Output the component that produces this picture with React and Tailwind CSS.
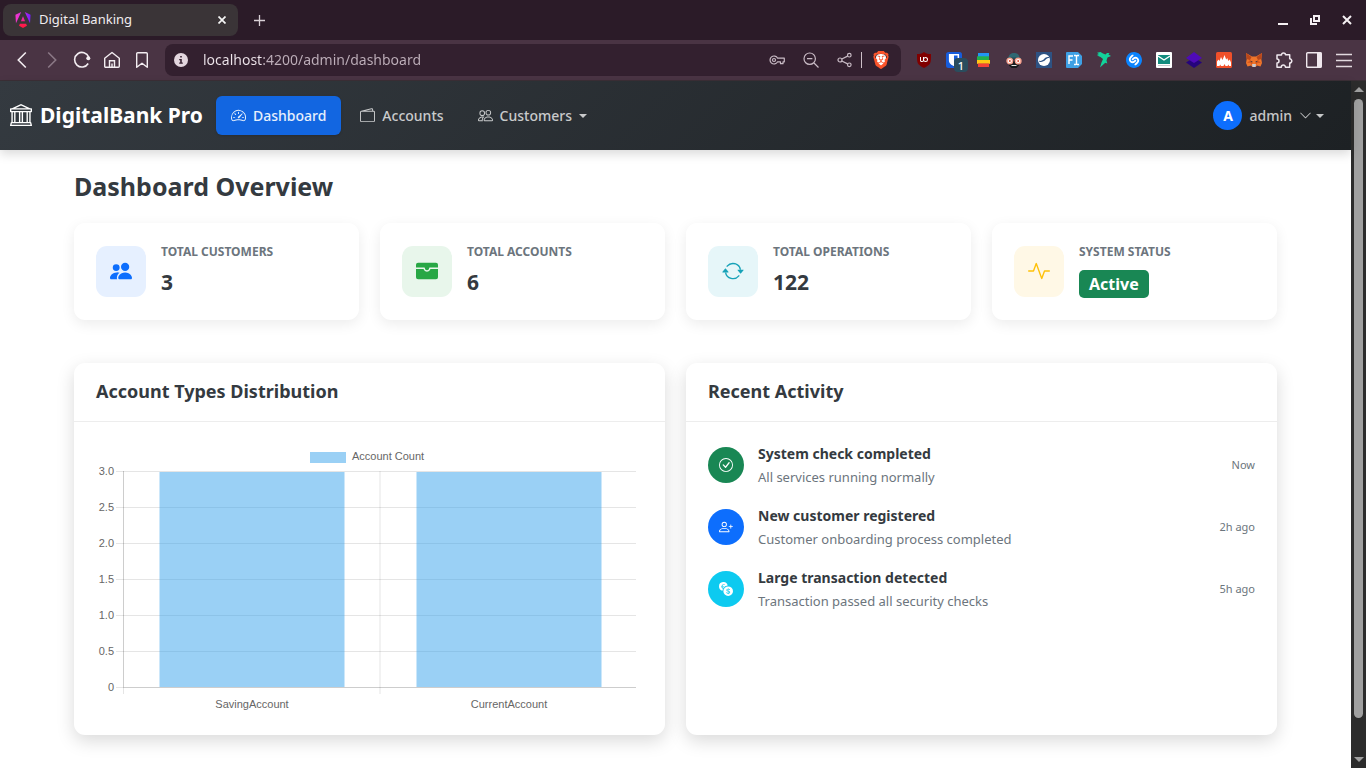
import React from "react";
import {
  BsBank, BsSpeedometer2, BsWallet2, BsPeople, BsPeopleFill, BsWalletFill, BsArrowRepeat,
  BsActivity, BsCheckCircle, BsPersonPlus, BsCurrencyExchange, BsChevronDown,
} from "react-icons/bs";
import { SiBrave, SiUblockorigin, SiBitwarden, SiShazam } from "react-icons/si";

const S = ({ children, size = 18, box = 18, ...p }) => (
  <svg width={size} height={size} viewBox={`0 0 ${box} ${box}`} fill="none" aria-hidden="true" {...p}>{children}</svg>
);

const Angular = () => (
  <S size={16} box={24}>
    <defs>
      <linearGradient id="ngBody" x1="0" y1="6" x2="24" y2="4" gradientUnits="userSpaceOnUse">
        <stop offset="0" stopColor="#f637c8" /><stop offset="0.5" stopColor="#d02be0" /><stop offset="1" stopColor="#6a1cff" />
      </linearGradient>
      <linearGradient id="ngFoot" x1="12" y1="6" x2="12" y2="24" gradientUnits="userSpaceOnUse">
        <stop offset="0" stopColor="#e62bd0" /><stop offset="0.7" stopColor="#ff1a52" /><stop offset="1" stopColor="#ff1a3c" />
      </linearGradient>
    </defs>
    <path fill="url(#ngBody)" d="M14.692 0l7.832 16.855.814-12.856L14.692 0ZM9.308 0 .662 3.999l.814 12.856L9.308 0Z" />
    <path fill="url(#ngFoot)" d="M16.712 17.711H7.288l-1.204 2.916L12 24l5.916-3.373-1.204-2.916ZM8.903 13.93h6.198L12 6.396 8.903 13.93Z" />
  </S>
);

const ToolButton = ({ label, children }) => (
  <button type="button" aria-label={label} className="flex h-8 w-[30px] shrink-0 items-center justify-center">{children}</button>
);

const Back = () => <S stroke="#f3edf1" strokeWidth="1.6"><path d="M12.800 1.500 5.300 9l7.500 7.500" /></S>;
const Forward = () => <S stroke="#8b7886" strokeWidth="1.6"><path d="M5.200 1.500 12.700 9l-7.500 7.500" /></S>;
const Reload = () => (
  <S stroke="#f3edf1" strokeWidth="1.6">
    <path d="M15.200 12.500A7.300 7.300 0 1 1 15.700 6" />
    <circle cx="15.300" cy="7.200" r="2" fill="#f3edf1" stroke="none" />
  </S>
);
const Home = () => (
  <S stroke="#f3edf1" strokeWidth="1.400">
    <path d="M1.700 7.200 9 1.500l7.300 5.700v8.100a1 1 0 0 1-1 1H2.700a1 1 0 0 1-1-1Z" strokeLinejoin="round" />
    <path d="M6.500 16V9.800h5V16M9 16v-3.500" />
  </S>
);
const Bookmark = () => <S stroke="#f3edf1" strokeWidth="1.400"><path d="M3.700 2.700a1 1 0 0 1 1-1h8.600a1 1 0 0 1 1 1v13.600L9 12.200l-5.300 4.100Z" strokeLinejoin="round" /></S>;
const Info = () => (
  <S size={14} box={14}>
    <circle cx="7" cy="7" r="7" fill="#e3d6de" />
    <path d="M6.200 3h1.600v1.600H6.200zM5.200 6h2.600v3.600h1v1.200H5.200V9.600h1V7.200h-1z" fill="#35202f" />
  </S>
);
const Key = () => (
  <S size={16} box={16} stroke="#c9bbc5" strokeWidth="1.200">
    <path d="M8.600 6.200H15.300V9.800H14V11.700H11.500V9.800H8.600A4 4 0 1 1 8.600 6.200Z" strokeLinejoin="round" />
    <circle cx="5" cy="8" r="1.500" />
  </S>
);
const ZoomOut = () => (
  <S size={16} box={16} stroke="#c9bbc5" strokeWidth="1.200"><circle cx="6.700" cy="6.700" r="5.700" /><path d="M11 11l4.500 4.500M4 6.700h5.400" /></S>
);
const Share = () => (
  <S size={16} box={16} stroke="#c9bbc5" strokeWidth="1.200">
    <circle cx="3" cy="8" r="2" /><circle cx="12.300" cy="3.200" r="1.800" /><circle cx="12.300" cy="12.800" r="1.800" />
    <path d="M4.800 7 10.600 4.100M4.800 9l5.800 2.900" />
  </S>
);
const BraveMark = () => (
  <span className="relative flex h-5 w-[18px] items-center justify-center">
    <span className="absolute h-3 w-2.5 rounded bg-white" />
    <SiBrave size={20} color="#fb542b" className="relative" />
  </span>
);
const Bitwarden = () => (
  <span className="relative flex h-4 w-4">
    <span className="absolute inset-0.5 bg-white" />
    <SiBitwarden size={16} color="#175ddc" className="relative" />
    <span className="absolute top-1.5 left-2 flex h-3.5 w-3.5 items-center justify-center rounded-sm bg-[#2a4d5e] text-[11px] leading-none font-medium text-white">1</span>
  </span>
);
const Stack = () => (
  <S size={14} box={14}>
    <path d="M1 0h11v4H1z" fill="#2196f3" /><path d="M0 3.300h12v4.200H0z" fill="#22b14c" />
    <path d="M0 7h13v3.800H0z" fill="#ffc914" /><path d="M1 10.500h11V14H1z" fill="#f44336" />
  </S>
);
const Spy = () => (
  <S size={16} box={16}>
    <path d="M2.500 6C2.500 2.500 5 1 8 1s5.500 1.500 5.500 5Z" fill="#2f6873" /><path d="M1 5.500h14V7H1z" fill="#264d57" />
    <path d="M3 9h10v4.500L10.500 16h-5L3 13.500Z" fill="#171a1d" />
    <circle cx="3.800" cy="9" r="2.800" fill="#fff" stroke="#f6a08d" strokeWidth="1.400" />
    <circle cx="12.200" cy="9" r="2.800" fill="#fff" stroke="#f6a08d" strokeWidth="1.400" />
    <circle cx="3.800" cy="9" r="1" fill="#d9472f" /><circle cx="12.200" cy="9" r="1" fill="#d9472f" />
    <path d="M5.500 13h5v1h-5z" fill="#e6e6e6" />
  </S>
);
const Wave = () => (
  <S size={16} box={16}>
    <path fill="#2e5283" d="M0 0h16v16H0z" /><circle cx="8" cy="8" r="6" fill="#fff" />
    <path d="M3.200 9.800C5.500 10.500 8 9.500 9.500 7.800c1.200-1.400 2.400-2 4-1.800a6 6 0 0 0-.3-.8C11 4.600 9.500 5.500 8.300 6.800 6.800 8.500 5 9.300 3.200 8.800Z" fill="#2e5283" />
  </S>
);
const Fonts = () => (
  <S size={16} box={16}>
    <path d="M1 0h11l4 4v8l-4 4H1a1 1 0 0 1-1-1V1a1 1 0 0 1 1-1Z" fill="#3ea0e5" />
    <path d="M3 12V4h4M3 8h3.500M8 3.500h1.500L10.500 4l1-.5H13M8 12.500h1.500l1-.5 1 .5H13M10.500 4v8" stroke="#fff" strokeWidth="1.400" />
  </S>
);
const Bird = () => (
  <S size={16} box={16}>
    <path d="M1 .800 4.500 0 7 1.500 9.500 2.500 11 1h2.500L12.500 2.500l2.500 1.500-3.500 1.500-1 3 .8 3-2-.8L4 15.500l1.500-5L7 7 4.500 5 1 3.500l2-.5L.800 2l2-.300Z" fill="#12d39b" />
  </S>
);
const Mail = () => (
  <S size={16} box={16}>
    <rect width="16" height="16" rx="1" fill="#fff" /><path d="M2 3h12v9H2z" fill="#128c7e" />
    <path d="m2 4 6 4 6-4" stroke="#fff" strokeWidth="1.400" /><path d="M2 13.500h12" stroke="#c7cccf" />
  </S>
);
const Layers = () => (
  <S size={16} box={16}><path d="m8 5.500 8 5L8 16 0 10.500Z" fill="#25047d" /><path d="m8 0 8 6-8 5-8-5Z" fill="#4f0bb8" /></S>
);
const Flames = () => (
  <S size={16} box={16}>
    <rect width="16" height="16" rx="1.500" fill="#f0502a" />
    <path d="M1 14V9.500L2.500 7.500l1 1.500L5 5l1.500 3L8.500 3l1.700 4.500L11.200 6l1.300 3L13.700 7.500 15 10.500V14h-2l-.5-1.500-1 1.500H9.500l-1-2-1 2H5l-.8-1.500L3.500 14Z" fill="#fff" />
  </S>
);
const Fox = () => (
  <S size={16} box={16}>
    <path d="m0 1 6 3.500h4L16 1l-.7 6L16 11l-1.500 3.500-3.500-1L9.500 15h-3L5 13.500l-3.500 1L0 11l.7-4Z" fill="#f0752b" />
    <path d="m0 1 5.500 4L4 8 .7 7ZM16 1l-5.500 4L12 8l3.300-1Z" fill="#b9471b" />
    <path d="m4 8 2.500 2-.5 3.500L4.500 11 1 11ZM12 8l-2.500 2 .5 3.500 1.500-2.500 3.500 0Z" fill="#d9591e" />
    <path d="M4 8.800 6.500 9.500 6 10.500ZM12 8.800 9.500 9.500l.5 1Z" fill="#233447" /><path d="m6 12.500.7-.5h2.600l.7.500-.5 2.500h-3Z" fill="#c9ccd2" />
  </S>
);
const Puzzle = () => (
  <S stroke="#f0e8ee" strokeWidth="1.500">
    <path d="M2 4h4.500A2 2 0 1 1 10.500 3.800h4.200v4A2 2 0 1 1 14.700 12v4.200h-4.200a2 2 0 1 0-4.200 0H2V12a2 2 0 1 0 0-4Z" strokeLinejoin="round" />
  </S>
);
const Panel = () => <S><rect x="1.700" y="1.700" width="14.600" height="14.600" rx="1" stroke="#f0e8ee" strokeWidth="1.400" /><path d="M12 1.500h4.500v15H12z" fill="#f0e8ee" /></S>;
const Menu = () => <S><path d="M1 3.500h16M1 9.500h16M1 15.500h16" stroke="#e2d9df" strokeWidth="1.500" /></S>;

const extensions = [
  ["uBlock Origin", () => <span className="relative flex h-4 w-4"><span className="absolute inset-1 bg-white" /><SiUblockorigin size={16} color="#800000" className="relative" /></span>],
  ["Bitwarden", Bitwarden], ["Stack", Stack], ["Privacy", Spy], ["Wave", Wave], ["Fonts", Fonts],
  ["Bird", Bird], ["Shazam", () => <span className="relative flex h-4 w-4"><span className="absolute inset-0.5 rounded-full bg-white" /><SiShazam size={16} color="#0a84ff" className="relative" /></span>],
  ["Mail", Mail], ["Layers", Layers], ["Flames", Flames], ["MetaMask", Fox],
  ["Extensions", Puzzle], ["Side panel", Panel], ["Menu", Menu],
];

function BrowserChrome() {
  return (
    <div className="shrink-0 border-b border-[#3b2f36]">
      <div className="flex h-10 items-center bg-[#2b1b28] pr-[3px]">
        <div className="ml-[3px] flex h-8 w-[235px] items-center rounded-lg bg-[#3a3437] pr-2 pl-3">
          <Angular />
          <span className="ml-2 flex-1 text-[13px] text-[#f1edf0]">Digital Banking</span>
          <button type="button" aria-label="Close tab" className="flex h-4 w-4 items-center justify-center">
            <S size={8} box={8} stroke="#f5f5f5" strokeWidth="1.700"><path d="m.5.5 7 7M7.500.5l-7 7" /></S>
          </button>
        </div>
        <button type="button" aria-label="New tab" className="ml-3 flex h-[18px] w-[18px] items-center justify-center">
          <S size={11} box={11} stroke="#d9d0d6" strokeWidth="1.300"><path d="M5.500 0v11M0 5.500h11" /></S>
        </button>
        <div className="ml-auto flex">
          <button type="button" aria-label="Minimize" className="flex h-8 w-8 items-center justify-center"><S size={10} box={10}><path d="M0 8h10v2H0z" fill="#f5f0f3" /></S></button>
          <button type="button" aria-label="Restore" className="flex h-8 w-8 items-center justify-center"><S size={10} box={10} stroke="#f5f0f3" strokeWidth="2"><path d="M4 1h5v5H4zM1 3v6h6" /></S></button>
          <button type="button" aria-label="Close" className="flex h-8 w-8 items-center justify-center"><S size={10} box={10} stroke="#f5f0f3" strokeWidth="2"><path d="m1 1 8 8M9 1 1 9" /></S></button>
        </div>
      </div>
      <div className="flex h-10 items-center bg-[#4a3444] px-[7px]">
        <ToolButton label="Back"><Back /></ToolButton>
        <ToolButton label="Forward"><Forward /></ToolButton>
        <ToolButton label="Reload"><Reload /></ToolButton>
        <ToolButton label="Home"><Home /></ToolButton>
        <ToolButton label="Bookmark"><Bookmark /></ToolButton>
        <div className="mx-2 flex h-8 min-w-0 flex-1 items-center rounded-lg bg-[#33202f] pr-2 pl-[9px]">
          <Info />
          <input
            aria-label="Address" type="text" defaultValue="localhost:4200/admin/dashboard"
            className="ml-[15px] min-w-0 flex-1 bg-[linear-gradient(90deg,#efe6ec_60px,#bfb0bb_60px)] bg-clip-text text-sm leading-8 text-transparent outline-none"
          />
          <div className="flex items-center">
            <button type="button" aria-label="Passwords" className="mr-[18px]"><Key /></button>
            <button type="button" aria-label="Zoom" className="mr-[18px]"><ZoomOut /></button>
            <button type="button" aria-label="Share" className="mr-2"><Share /></button>
            <span className="mr-2.5 h-4 w-px bg-[#cdbfc8]" />
            <button type="button" aria-label="Brave Shields" className="mr-[3px]"><BraveMark /></button>
          </div>
        </div>
        {extensions.map(([label, Icon]) => <ToolButton key={label} label={label}><Icon /></ToolButton>)}
      </div>
    </div>
  );
}

const Caret = () => <span className="h-0 w-0 border-x-4 border-t-4 border-x-transparent border-t-current" />;

function Navbar() {
  return (
    <nav className="relative flex h-[69px] items-center bg-linear-135 from-[#343a40] to-[#1d2124] pr-[27px] pl-2.5 shadow-[0_4px_10px_rgba(0,0,0,0.15)]">
      <a href="#home" className="mr-[13px] flex items-center gap-2 pb-0.5 text-[21px] leading-8 font-bold text-white">
        <BsBank size={22} />DigitalBank Pro
      </a>
      <div className="flex gap-1 text-sm font-medium text-white/75">
        <a href="#dashboard" className="flex h-[39px] items-center gap-[7px] rounded-md bg-[#1266e1] px-[15px] text-white/90 shadow-sm">
          <BsSpeedometer2 size={15} />Dashboard
        </a>
        <a href="#accounts" className="flex h-[39px] items-center gap-[7px] px-[15px]"><BsWallet2 size={15} />Accounts</a>
        <button type="button" className="flex h-[39px] items-center gap-[7px] px-[15px]"><BsPeople size={15} />Customers<Caret /></button>
      </div>
      <button type="button" className="ml-auto flex items-center gap-[7px] text-sm font-medium text-white/75">
        <span className="flex h-[29px] w-[29px] items-center justify-center rounded-full bg-[#0d6efd] text-sm font-bold text-white">A</span>
        admin
        <span className="flex items-center gap-1"><BsChevronDown size={13} /><Caret /></span>
      </button>
    </nav>
  );
}

const stats = [
  { label: "Total Customers", value: "3", Icon: BsPeopleFill, tone: "bg-[#e6f0ff] text-[#0d6efd]" },
  { label: "Total Accounts", value: "6", Icon: BsWalletFill, tone: "bg-[#e8f6eb] text-[#28a745]" },
  { label: "Total Operations", value: "122", Icon: BsArrowRepeat, tone: "bg-[#e6f6f9] text-[#17a2b8]" },
  { label: "System Status", badge: "Active", Icon: BsActivity, tone: "bg-[#fff8e6] text-[#ffc107]" },
];

function StatCard({ label, value, badge, Icon, tone }) {
  return (
    <section className="flex items-center rounded-[11px] bg-white px-[22px] py-[21px] shadow-[0_4px_14px_rgba(0,0,0,0.08)]">
      <div className={`flex h-[51px] w-[50px] shrink-0 items-center justify-center rounded-[11px] pb-px ${tone}`}><Icon size={22} /></div>
      <div className="ml-[15px] h-[55px]">
        <h2 className="text-xs leading-4 font-bold whitespace-nowrap text-[#6c757d] uppercase">{label}</h2>
        {badge
          ? <span className="mt-2.5 flex h-7 w-fit items-center rounded-[5px] bg-[#198754] px-2.5 text-base font-bold text-white">{badge}</span>
          : <p className="mt-2 text-[21px] leading-7 font-bold text-[#343a40]">{value}</p>}
      </div>
    </section>
  );
}

const ticks = ["3.0", "2.5", "2.0", "1.5", "1.0", "0.5", "0"];

function BarChart() {
  return (
    <svg viewBox="0 -1 547 273" className="w-full" role="img" aria-label="Account Count by account type">
      <g stroke="#000" strokeOpacity="0.1">
        {ticks.map((t, i) => <path key={t} d={`M20 ${28.5 + i * 36}H540`} />)}
        <path d="M27.500 28v223M284 28v223M27.500 28v217M28 244.500H540" />
      </g>
      <g fill="#36a2eb" fillOpacity="0.5"><path d="M63.500 29h185v215h-185zM320.500 29h185v215h-185zM214 9h36v11h-36z" /></g>
      <g fill="#666" fontFamily="'Liberation Sans', Arial, sans-serif" fontSize="11">
        <text x="256" y="17">Account Count</text>
        {ticks.map((t, i) => <text key={t} x="18" y={32 + i * 36} textAnchor="end">{t}</text>)}
        <text x="156" y="265" textAnchor="middle">SavingAccount</text>
        <text x="413" y="265" textAnchor="middle">CurrentAccount</text>
      </g>
    </svg>
  );
}

const activity = [
  { title: "System check completed", text: "All services running normally", time: "Now", Icon: BsCheckCircle, tone: "bg-[#198754]" },
  { title: "New customer registered", text: "Customer onboarding process completed", time: "2h ago", Icon: BsPersonPlus, tone: "bg-[#0d6efd]" },
  { title: "Large transaction detected", text: "Transaction passed all security checks", time: "5h ago", Icon: BsCurrencyExchange, tone: "bg-[#0dcaf0]" },
];

function Card({ title, children }) {
  return (
    <section className="rounded-[11px] bg-white shadow-[0_6px_18px_rgba(0,0,0,0.15)]">
      <h2 className="border-b border-[#ededed] px-[22px] pt-[15px] pb-[17px] text-lg leading-[26px] font-bold text-[#343a40]">{title}</h2>
      <div className="px-[22px] py-5">{children}</div>
    </section>
  );
}

function Scrollbar() {
  return (
    <div className="flex w-[15px] shrink-0 flex-col items-center bg-[#2c2c2c] py-1.5" aria-hidden="true">
      <span className="border-x-[5px] border-b-[5px] border-x-transparent border-b-[#a0a0a0]" />
      <span className="mt-[7px] mb-[39px] w-[9px] flex-1 rounded-full bg-[#a0a0a0]" />
      <span className="border-x-[5px] border-t-[5px] border-x-transparent border-t-[#a0a0a0]" />
    </div>
  );
}

export default function App() {
  return (
    <div className="flex min-h-screen flex-col bg-white font-['Noto_Sans',sans-serif]">
      <BrowserChrome />
      <div className="flex flex-1">
        <div className="min-w-0 flex-1">
          <Navbar />
          <main className="mx-auto max-w-[1225px] px-[11px] pt-[19px]">
            <h1 className="text-[25px] leading-[34px] font-bold text-[#343a40]">Dashboard Overview</h1>
            <div className="mt-5 grid grid-cols-4 gap-[21px]">
              {stats.map((s) => <StatCard key={s.label} {...s} />)}
            </div>
            <div className="mt-[43px] grid grid-cols-2 gap-[21px]">
              <Card title="Account Types Distribution"><BarChart /></Card>
              <Card title="Recent Activity">
                <ul className="flex flex-col gap-4">
                  {activity.map(({ title, text, time, Icon, tone }) => (
                    <li key={title} className="flex items-center">
                      <span className={`flex h-9 w-9 shrink-0 items-center justify-center rounded-full text-white ${tone}`}><Icon size={14} /></span>
                      <div className="ml-3.5 flex-1">
                        <h3 className="text-sm leading-6 font-bold text-[#343a40]">{title}</h3>
                        <p className="text-[13px] leading-[22px] text-[#6c757d]">{text}</p>
                      </div>
                      <span className="text-[11px] text-[#6c757d]">{time}</span>
                    </li>
                  ))}
                </ul>
              </Card>
            </div>
          </main>
        </div>
        <Scrollbar />
      </div>
    </div>
  );
}
